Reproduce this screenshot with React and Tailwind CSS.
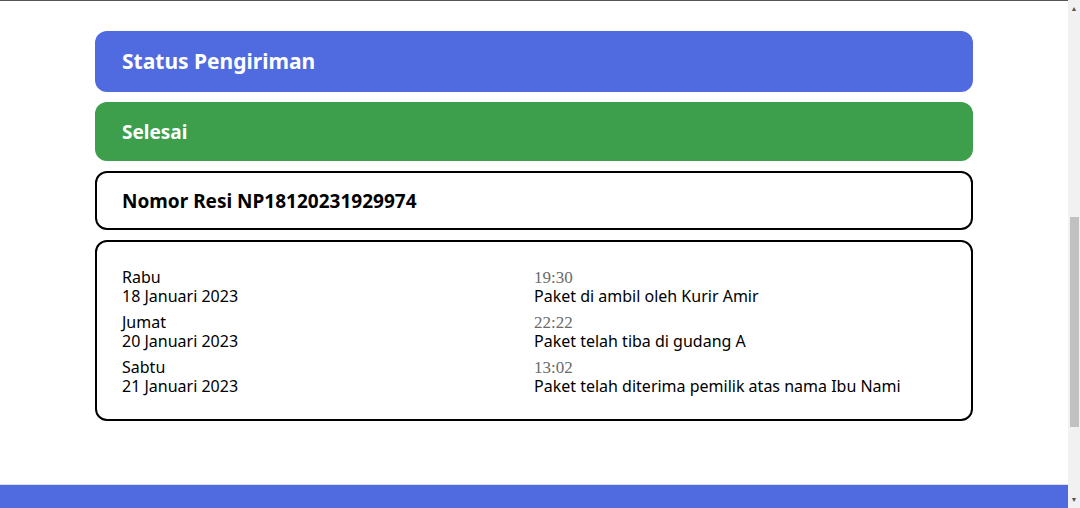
const events = [
  { day: "Rabu", date: "18 Januari 2023", time: "19:30", note: "Paket di ambil oleh Kurir Amir" },
  { day: "Jumat", date: "20 Januari 2023", time: "22:22", note: "Paket telah tiba di gudang A" },
  { day: "Sabtu", date: "21 Januari 2023", time: "13:02", note: "Paket telah diterima pemilik atas nama Ibu Nami" },
];

export default function App() {
  return (
    <div className="flex h-[508px] w-[1080px] overflow-hidden bg-white font-['Noto_Sans',sans-serif]">
      {/* Page */}
      <div className="flex flex-1 flex-col border-t border-[#555]">
        <main className="flex flex-1 flex-col gap-[10px] px-[95px] pt-[30px]">
          <div className="flex h-[61px] items-center rounded-xl bg-[#506adf] px-[27px] pt-[1px]">
            <h1 className="text-[21px] font-bold text-white">Status Pengiriman</h1>
          </div>

          <div className="flex h-[59px] items-center rounded-xl bg-[#3d9e4c] px-[27px] pt-[1px]">
            <h2 className="text-[19px] font-bold text-white">Selesai</h2>
          </div>

          <div className="flex h-[59px] items-center rounded-xl border-2 border-black px-[25px] pt-[1px]">
            <h2 className="text-[19px] font-bold text-black">Nomor Resi NP18120231929974</h2>
          </div>

          {/* Timeline */}
          <div className="flex h-[181px] flex-col justify-center gap-[7px] rounded-xl border-2 border-black px-[25px] pt-[2px]">
            {events.map((e) => (
              <div key={e.day} className="grid grid-cols-2 text-[16px] leading-[19px] text-black">
                <div>
                  <p>{e.day}</p>
                  <p>{e.date}</p>
                </div>
                <div>
                  <p className="font-['Liberation_Serif',serif] text-[17px] text-[#6a6a6a]">{e.time}</p>
                  <p>{e.note}</p>
                </div>
              </div>
            ))}
          </div>
        </main>

        <footer className="h-[24px] border-t border-[#dde] bg-[#506adf]" />
      </div>

      {/* Scrollbar */}
      <div className="flex w-[12px] flex-col items-center bg-[#f1f1f1]">
        <span className="mt-[5px] text-[7px] leading-none text-[#555]">▲</span>
        <div className="mt-[205px] h-[210px] w-[9px] bg-[#c1c1c1]" />
        <span className="mt-auto mb-[5px] text-[7px] leading-none text-[#555]">▼</span>
      </div>
    </div>
  );
}
